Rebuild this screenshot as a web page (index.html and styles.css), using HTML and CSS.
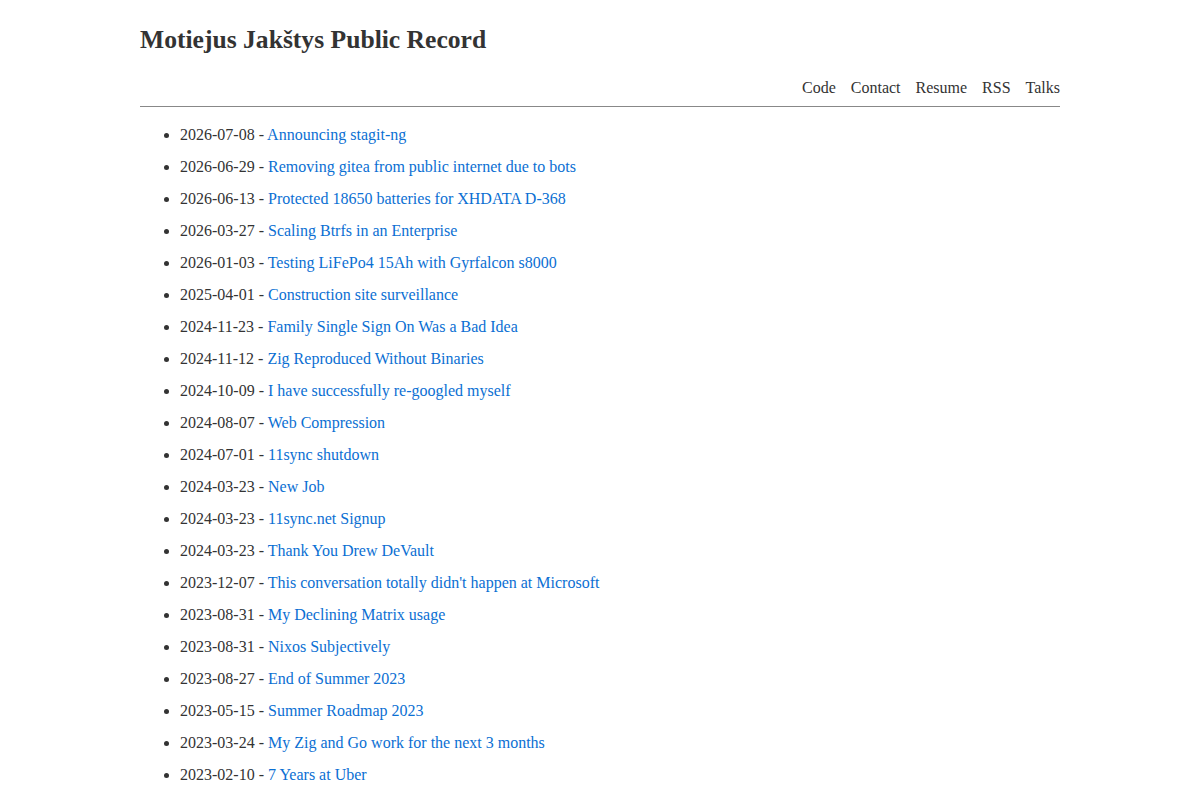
FILE: index.html
```html
<!DOCTYPE html>
<html lang="en">
<head>
<meta charset="utf-8">
<title>Motiejus Jakštys Public Record</title>
<link rel="stylesheet" href="styles.css">
</head>
<body>
<div class="page">
  <header class="header">
    <h1 class="title">Motiejus Jakštys Public Record</h1>
    <nav class="nav">
      <a href="#">Code</a>
      <a href="#">Contact</a>
      <a href="#">Resume</a>
      <a href="#">RSS</a>
      <a href="#">Talks</a>
    </nav>
  </header>
  <ul class="posts">
    <li>2026-07-08 - <a href="#">Announcing stagit-ng</a></li>
    <li>2026-06-29 - <a href="#">Removing gitea from public internet due to bots</a></li>
    <li>2026-06-13 - <a href="#">Protected 18650 batteries for XHDATA D-368</a></li>
    <li>2026-03-27 - <a href="#">Scaling Btrfs in an Enterprise</a></li>
    <li>2026-01-03 - <a href="#">Testing LiFePo4 15Ah with Gyrfalcon s8000</a></li>
    <li>2025-04-01 - <a href="#">Construction site surveillance</a></li>
    <li>2024-11-23 - <a href="#">Family Single Sign On Was a Bad Idea</a></li>
    <li>2024-11-12 - <a href="#">Zig Reproduced Without Binaries</a></li>
    <li>2024-10-09 - <a href="#">I have successfully re-googled myself</a></li>
    <li>2024-08-07 - <a href="#">Web Compression</a></li>
    <li>2024-07-01 - <a href="#">11sync shutdown</a></li>
    <li>2024-03-23 - <a href="#">New Job</a></li>
    <li>2024-03-23 - <a href="#">11sync.net Signup</a></li>
    <li>2024-03-23 - <a href="#">Thank You Drew DeVault</a></li>
    <li>2023-12-07 - <a href="#">This conversation totally didn't happen at Microsoft</a></li>
    <li>2023-08-31 - <a href="#">My Declining Matrix usage</a></li>
    <li>2023-08-31 - <a href="#">Nixos Subjectively</a></li>
    <li>2023-08-27 - <a href="#">End of Summer 2023</a></li>
    <li>2023-05-15 - <a href="#">Summer Roadmap 2023</a></li>
    <li>2023-03-24 - <a href="#">My Zig and Go work for the next 3 months</a></li>
    <li>2023-02-10 - <a href="#">7 Years at Uber</a></li>
  </ul>
</div>
</body>
</html>
```

FILE: styles.css
```css
html, body {
  margin: 0;
  padding: 0;
  background: #fff;
}
body {
  font-family: "Liberation Serif", "Times New Roman", serif;
  font-size: 16px;
  color: #333;
}
.page {
  width: 920px;
  margin: 0 auto;
  padding-top: 22px;
}
.title {
  margin: 0;
  font-size: 25.6px;
  font-weight: bold;
  line-height: 36px;
  color: #333;
}
.nav {
  display: flex;
  justify-content: flex-end;
  gap: 15px;
  margin-top: 18px;
  padding-bottom: 6px;
  border-bottom: 1px solid #888;
  line-height: 24px;
}
.nav a {
  color: #333;
  text-decoration: none;
}
.posts {
  margin: 12px 0 0;
  padding-left: 40px;
}
.posts li {
  line-height: 32px;
}
.posts a {
  color: #0b6fd3;
  text-decoration: none;
}
```
